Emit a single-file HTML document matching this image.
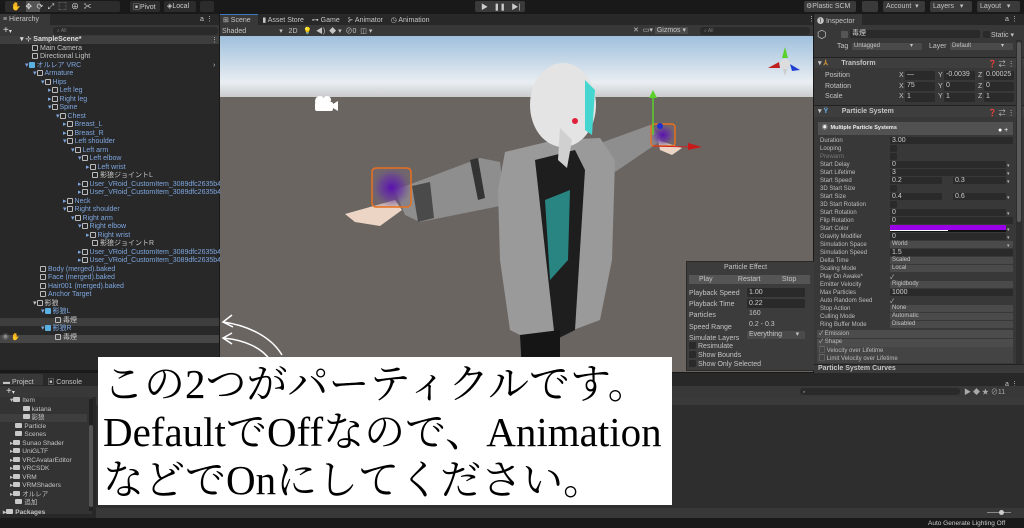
<!DOCTYPE html>
<html><head><meta charset="utf-8"><style>
*{margin:0;padding:0;box-sizing:border-box}
body{width:1024px;height:528px;overflow:hidden;background:#191919;font-family:"Liberation Sans","Noto Sans CJK JP",sans-serif;font-size:7px;color:#c4c4c4;position:relative}
.a{position:absolute;white-space:nowrap}
.btn{position:absolute;background:#3a3a3a;border-radius:2px}
.r{position:absolute;height:8px;line-height:8px;white-space:nowrap}
.b{color:#7ea6df}
.ic{display:inline-block;width:6px;height:6px;border:1px solid #bbb;border-radius:1px;margin-right:2px;vertical-align:-1px}
.fld{position:absolute;background:#2a2a2a;height:7px;line-height:7px;padding-left:2px;border-radius:1px;color:#ccc}
.lbl{position:absolute;left:820px;line-height:8px;height:8px;color:#bdbdbd;font-size:6px}
.dd{position:absolute;background:#4a4a4a;height:7px;line-height:7px;padding-left:2px;border-radius:1px;font-size:6px}
.cb{position:absolute;width:7px;height:7px;background:#2a2a2a;border-radius:1px}
.fo{display:inline-block;width:7px;height:5px;background:#c8c8c8;margin-right:2px;vertical-align:0;border-radius:1px}
</style></head><body>
<!-- top toolbar -->
<div class="btn" style="left:5px;top:1px;width:115px;height:11px;background:#2c2c2c"></div>
<div class="a" style="left:26px;top:1px;width:14px;height:11px;background:#555"></div>
<div class="a" style="left:11px;top:1px;color:#ddd;font-size:8px">✋ &nbsp;✥ &nbsp;⟳ &nbsp;⤢ &nbsp;⬚ &nbsp;⊕ &nbsp;✂</div>
<div class="btn" style="left:130px;top:1px;width:30px;height:11px;background:#2c2c2c"></div>
<div class="a" style="left:133px;top:2px;color:#ccc">▣Pivot</div>
<div class="btn" style="left:164px;top:1px;width:32px;height:11px;background:#2c2c2c"></div>
<div class="a" style="left:167px;top:2px;color:#ccc">◈Local</div>
<div class="btn" style="left:200px;top:1px;width:14px;height:11px;background:#2c2c2c"></div>
<div class="btn" style="left:475px;top:1px;width:50px;height:11px;background:#3a3a3a"></div>
<div class="a" style="left:481px;top:2px;color:#ccc;font-size:7px">▶ &nbsp;&nbsp;❚❚ &nbsp;&nbsp;▶|</div>
<div class="btn" style="left:804px;top:1px;width:52px;height:11px"></div>
<div class="a" style="left:806px;top:2px">⚙Plastic SCM</div>
<div class="btn" style="left:862px;top:1px;width:16px;height:11px"></div>
<div class="btn" style="left:883px;top:1px;width:42px;height:11px"></div>
<div class="a" style="left:886px;top:2px">Account &nbsp;▾</div>
<div class="btn" style="left:930px;top:1px;width:42px;height:11px"></div>
<div class="a" style="left:933px;top:2px">Layers &nbsp;&nbsp;▾</div>
<div class="btn" style="left:977px;top:1px;width:43px;height:11px"></div>
<div class="a" style="left:980px;top:2px">Layout &nbsp;&nbsp;▾</div>

<!-- Hierarchy -->
<div class="a" style="left:0;top:14px;width:219px;height:356px;background:#282828"></div>
<div class="a" style="left:0;top:14px;width:50px;height:11px;background:#383838"></div>
<div class="a" style="left:3px;top:16px">≡ Hierarchy</div>
<div class="a" style="left:200px;top:15px">a ⋮</div>
<div class="a" style="left:0;top:25px;width:219px;height:11px;background:#383838"></div>
<div class="a" style="left:3px;top:25px;font-size:10px;color:#ddd">+<span style="font-size:6px">▾</span></div>
<div class="a" style="left:53px;top:27px;width:165px;height:8px;background:#2a2a2a;border-radius:3px;font-size:5px;line-height:8px;padding-left:4px;color:#777">⌕ All</div>
<div class="a" style="left:0;top:36px;width:219px;height:8px;background:#3e3e3e"></div>
<div class="a" style="left:0;top:318px;width:219px;height:8px;background:#3e3e3e"></div>
<div class="a" style="left:0;top:335px;width:219px;height:8px;background:#464646"></div>
<div class="r" style="left:20px;top:36px;color:#ddd;font-weight:bold">▾ ⊹ SampleScene*</div>
<div class="a" style="left:211px;top:36px">⋮</div>
<div class="r" style="left:32px;top:44.5px"><span class="ic"></span>Main Camera</div>
<div class="r" style="left:32px;top:53px"><span class="ic"></span>Directional Light</div>
<div class="r b" style="left:25px;top:61.5px">▾<span class="ic" style="background:#5ab0e0;border-color:#5ab0e0"></span>オルレア VRC</div>
<div class="a" style="left:213px;top:62px">›</div>
<div class="r b" style="left:33px;top:70px">▾<span class="ic"></span>Armature</div>
<div class="r b" style="left:41px;top:78.5px">▾<span class="ic"></span>Hips</div>
<div class="r b" style="left:48px;top:87px">▸<span class="ic"></span>Left leg</div>
<div class="r b" style="left:48px;top:95.5px">▸<span class="ic"></span>Right leg</div>
<div class="r b" style="left:48px;top:104px">▾<span class="ic"></span>Spine</div>
<div class="r b" style="left:56px;top:112.5px">▾<span class="ic"></span>Chest</div>
<div class="r b" style="left:63px;top:121px">▸<span class="ic"></span>Breast_L</div>
<div class="r b" style="left:63px;top:129.5px">▸<span class="ic"></span>Breast_R</div>
<div class="r b" style="left:63px;top:138px">▾<span class="ic"></span>Left shoulder</div>
<div class="r b" style="left:71px;top:146.5px">▾<span class="ic"></span>Left arm</div>
<div class="r b" style="left:78px;top:155px">▾<span class="ic"></span>Left elbow</div>
<div class="r b" style="left:86px;top:163.5px">▸<span class="ic"></span>Left wrist</div>
<div class="r" style="left:92px;top:172px"><span class="ic"></span>影狼ジョイントL</div>
<div class="r b" style="left:78px;top:180.5px">▸<span class="ic"></span>User_VRoid_CustomItem_3089dfc2635b4</div>
<div class="r b" style="left:78px;top:189px">▸<span class="ic"></span>User_VRoid_CustomItem_3089dfc2635b4</div>
<div class="r b" style="left:63px;top:197.5px">▸<span class="ic"></span>Neck</div>
<div class="r b" style="left:63px;top:206px">▾<span class="ic"></span>Right shoulder</div>
<div class="r b" style="left:71px;top:214.5px">▾<span class="ic"></span>Right arm</div>
<div class="r b" style="left:78px;top:223px">▾<span class="ic"></span>Right elbow</div>
<div class="r b" style="left:86px;top:231.5px">▸<span class="ic"></span>Right wrist</div>
<div class="r" style="left:92px;top:240px"><span class="ic"></span>影狼ジョイントR</div>
<div class="r b" style="left:78px;top:248.5px">▸<span class="ic"></span>User_VRoid_CustomItem_3089dfc2635b4</div>
<div class="r b" style="left:78px;top:257px">▸<span class="ic"></span>User_VRoid_CustomItem_3089dfc2635b4</div>
<div class="r b" style="left:40px;top:265.5px"><span class="ic"></span>Body (merged).baked</div>
<div class="r b" style="left:40px;top:274px"><span class="ic"></span>Face (merged).baked</div>
<div class="r b" style="left:40px;top:282.5px"><span class="ic"></span>Hair001 (merged).baked</div>
<div class="r b" style="left:40px;top:291px"><span class="ic"></span>Anchor Target</div>
<div class="r" style="left:33px;top:299.5px">▾<span class="ic"></span>影狼</div>
<div class="r b" style="left:41px;top:308px">▾<span class="ic" style="background:#5ab0e0;border-color:#5ab0e0"></span>影狼L</div>
<div class="r" style="left:55px;top:316.5px"><span class="ic"></span>毒煙</div>
<div class="r b" style="left:41px;top:325px">▾<span class="ic" style="background:#5ab0e0;border-color:#5ab0e0"></span>影狼R</div>
<div class="r" style="left:55px;top:333.5px"><span class="ic"></span>毒煙</div>
<div class="r" style="left:2px;top:334px;color:#888">◉ ✋</div>

<!-- Scene -->
<div class="a" style="left:220px;top:14px;width:593px;height:22px;background:#282828"></div>
<div class="a" style="left:220px;top:14px;width:38px;height:11px;background:#383838;border-top:1px solid #3a79bb"></div>
<div class="a" style="left:223px;top:16px">⊞ Scene &nbsp;&nbsp;&nbsp;&nbsp;&nbsp;▮ Asset Store &nbsp;&nbsp;&nbsp;⊶ Game &nbsp;&nbsp;&nbsp;⊱ Animator &nbsp;&nbsp;&nbsp;◷ Animation</div>
<div class="a" style="left:808px;top:15px">⋮</div>
<div class="a" style="left:220px;top:25px;width:593px;height:11px;background:#383838"></div>
<div class="a" style="left:222px;top:26px">Shaded &nbsp;&nbsp;&nbsp;&nbsp;&nbsp;&nbsp;&nbsp;&nbsp;&nbsp;&nbsp;&nbsp;&nbsp;&nbsp;&nbsp;&nbsp;&nbsp;▾ &nbsp;&nbsp;2D &nbsp;&nbsp;💡 &nbsp;◀) &nbsp;◆ ▾ &nbsp;⊘0 &nbsp;◫ ▾</div>
<div class="a" style="left:633px;top:26px">✕ &nbsp;▭▾ <span style="background:#4a4a4a;padding:0 2px">Gizmos ▾</span></div>
<div class="a" style="left:700px;top:27px;width:110px;height:8px;background:#2a2a2a;border-radius:3px;font-size:5px;line-height:8px;padding-left:4px;color:#777">⌕ All</div>
<svg class="a" style="left:220px;top:36px" width="593" height="336" viewBox="220 36 593 336">
<defs><linearGradient id="sky" x1="0" y1="0" x2="0" y2="1"><stop offset="0" stop-color="#9fbfdc"/><stop offset="0.75" stop-color="#e9eef2"/><stop offset="1" stop-color="#c8c8c8"/></linearGradient>
<radialGradient id="pu"><stop offset="0" stop-color="#5a10b0"/><stop offset="0.6" stop-color="#6a3aa0" stop-opacity="0.7"/><stop offset="1" stop-color="#7a6a80" stop-opacity="0.3"/></radialGradient></defs>
<rect x="220" y="36" width="593" height="62" fill="url(#sky)"/>
<rect x="220" y="97" width="593" height="275" fill="#6b6562"/>
<path d="M345 214 L395 200 L402 210 L380 226 L355 222Z" fill="#ecd5c4"/>
<path d="M395 190 L480 158 L500 162 L505 205 L420 222 L405 215Z" fill="#8e8e8e"/>
<path d="M412 186 L430 182 L434 218 L418 222Z" fill="#4a4a4a"/>
<path d="M470 160 L478 158 L485 198 L478 200Z" fill="#333"/>
<path d="M595 145 L650 125 L662 140 L615 172Z" fill="#8e8e8e"/>
<path d="M658 140 L682 148 L672 155 L660 150Z" fill="#ecd5c4"/>
<path d="M505 152 L555 140 L600 138 L615 160 L612 260 L600 320 L560 335 L540 345 L510 330 L500 260 L498 190Z" fill="#9a9a9a"/>
<path d="M535 160 L575 150 L585 170 L575 330 L555 340 L545 250Z" fill="#1e1e1e"/>
<path d="M545 200 L570 190 L568 260 L550 280Z" fill="#2fc9c5" opacity="0.6"/>
<path d="M520 335 L560 330 L560 372 L522 372Z" fill="#151515"/>
<ellipse cx="563" cy="105" rx="33" ry="42" fill="#e4e4e4"/>
<path d="M585 80 L595 90 L592 135 L585 130Z" fill="#45d6cf"/>
<path d="M560 128 L572 140 L567 168 L558 160Z" fill="#d0d0d0"/>
<circle cx="575" cy="121" r="3" fill="#e0203a"/>
<rect x="372" y="168" width="39" height="39" rx="4" fill="url(#pu)" stroke="#e8701e" stroke-width="1.5"/>
<rect x="651" y="124" width="24" height="22" rx="3" fill="url(#pu)" stroke="#e8701e" stroke-width="1.5"/>
<line x1="653" y1="135" x2="653" y2="96" stroke="#5ad02a" stroke-width="1.5"/><path d="M649 98 L653 90 L657 98Z" fill="#5ad02a"/>
<line x1="653" y1="146" x2="690" y2="147" stroke="#d02020" stroke-width="1"/><path d="M688 143 L702 147 L688 150Z" fill="#c81a1a"/>
<circle cx="660" cy="126" r="3" fill="#2030d0"/>
<circle cx="320" cy="101" r="5" fill="#fff"/><circle cx="327" cy="100" r="4" fill="#fff"/><rect x="315" y="102" width="18" height="9" rx="2" fill="#fff"/><path d="M333 104 L338 101 L338 111 L333 108Z" fill="#fff"/>
<circle cx="785" cy="64" r="5" fill="#ddd"/><path d="M782 58 L785 47 L788 58Z" fill="#5ad02a"/><path d="M779 62 L768 68 L780 68Z" fill="#c02020"/><path d="M790 64 L800 70 L792 71Z" fill="#2040d0"/><path d="M783 69 L785 76 L787 69Z" fill="#ccc"/>
<path d="M223 322 C245 325 270 335 282 355" stroke="#fff" stroke-width="1.5" fill="none"/>
<path d="M223 338 C245 340 262 348 270 360" stroke="#fff" stroke-width="1.5" fill="none"/>
<path d="M232 315 L223 322 L233 327 M232 333 L223 338 L232 344" stroke="#fff" stroke-width="1.5" fill="none"/>
</svg>
<!-- Particle effect panel -->
<div class="a" style="left:686px;top:261px;width:129px;height:110px;background:#3c3c3c;border:1px solid #2a2a2a"></div>
<div class="a" style="left:724px;top:264px">Particle Effect</div>
<div class="a" style="left:689px;top:275px;width:121px;height:9px;background:#555"></div>
<div class="a" style="left:699px;top:276px">Play &nbsp;&nbsp;&nbsp;&nbsp;&nbsp;&nbsp;&nbsp;&nbsp;&nbsp;&nbsp;&nbsp;&nbsp;Restart &nbsp;&nbsp;&nbsp;&nbsp;&nbsp;&nbsp;&nbsp;&nbsp;&nbsp;&nbsp;Stop</div>
<div class="a" style="left:689px;top:288px;line-height:11.2px">Playback Speed<br>Playback Time<br>Particles<br>Speed Range<br>Simulate Layers</div>
<div class="fld" style="left:747px;top:288px;width:58px;height:9px;line-height:9px">1.00</div>
<div class="fld" style="left:747px;top:299px;width:58px;height:9px;line-height:9px">0.22</div>
<div class="a" style="left:749px;top:310px">160</div>
<div class="a" style="left:749px;top:321px">0.2 - 0.3</div>
<div class="dd" style="left:747px;top:331px;width:58px;height:8px;font-size:7px">Everything &nbsp;&nbsp;&nbsp;&nbsp;&nbsp;&nbsp;▾</div>
<div class="cb" style="left:689px;top:342px"></div><div class="cb" style="left:689px;top:351px"></div><div class="cb" style="left:689px;top:360px"></div>
<div class="a" style="left:698px;top:342px;line-height:9px">Resimulate<br>Show Bounds<br>Show Only Selected</div>

<!-- Inspector -->
<div class="a" style="left:814px;top:14px;width:210px;height:358px;background:#383838"></div>
<div class="a" style="left:814px;top:14px;width:210px;height:11px;background:#282828"></div>
<div class="a" style="left:814px;top:14px;width:48px;height:11px;background:#383838"></div>
<div class="a" style="left:817px;top:16px">❶ Inspector</div>
<div class="a" style="left:1005px;top:15px">a ⋮</div>
<div class="a" style="left:817px;top:28px;font-size:11px;color:#ccc">⬡</div>
<div class="cb" style="left:841px;top:31px;background:#555"></div>
<div class="fld" style="left:850px;top:30px;width:130px;height:8px">毒煙</div>
<div class="cb" style="left:983px;top:31px"></div><div class="a" style="left:991px;top:31px">Static ▾</div>
<div class="a" style="left:837px;top:43px">Tag</div>
<div class="dd" style="left:852px;top:43px;width:70px">Untagged &nbsp;&nbsp;&nbsp;&nbsp;&nbsp;&nbsp;&nbsp;&nbsp;&nbsp;&nbsp;&nbsp;&nbsp;&nbsp;&nbsp;&nbsp;&nbsp;&nbsp;▾</div>
<div class="a" style="left:929px;top:43px">Layer</div>
<div class="dd" style="left:950px;top:43px;width:63px">Default &nbsp;&nbsp;&nbsp;&nbsp;&nbsp;&nbsp;&nbsp;&nbsp;&nbsp;&nbsp;&nbsp;&nbsp;&nbsp;&nbsp;&nbsp;&nbsp;&nbsp;▾</div>
<div class="a" style="left:814px;top:57px;width:210px;height:11px;background:#3e3e3e;border-top:1px solid #222"></div>
<div class="a" style="left:818px;top:59px;font-weight:bold">▾ <span style="color:#e0a040">⅄</span> &nbsp;&nbsp;&nbsp;&nbsp;&nbsp;&nbsp;Transform</div>
<div class="a" style="left:988px;top:59px">❓ ⇄ ⋮</div>
<div class="a" style="left:825px;top:71px;line-height:10.7px">Position<br>Rotation<br>Scale</div>
<div class="a" style="left:899px;top:71px;line-height:10.7px">X<br>X<br>X</div>
<div class="a" style="left:938px;top:71px;line-height:10.7px">Y<br>Y<br>Y</div>
<div class="a" style="left:978px;top:71px;line-height:10.7px">Z<br>Z<br>Z</div>
<div class="fld" style="left:905px;top:71px;width:30px;height:9px">—</div><div class="fld" style="left:944px;top:71px;width:31px;height:9px">-0.0039</div><div class="fld" style="left:984px;top:71px;width:30px;height:9px">0.00025</div>
<div class="fld" style="left:905px;top:82px;width:30px;height:9px">75</div><div class="fld" style="left:944px;top:82px;width:31px;height:9px">0</div><div class="fld" style="left:984px;top:82px;width:30px;height:9px">0</div>
<div class="fld" style="left:905px;top:93px;width:30px;height:9px">1</div><div class="fld" style="left:944px;top:93px;width:31px;height:9px">1</div><div class="fld" style="left:984px;top:93px;width:30px;height:9px">1</div>
<div class="a" style="left:814px;top:105px;width:210px;height:12px;background:#3e3e3e;border-top:1px solid #222"></div>
<div class="a" style="left:818px;top:107px;font-weight:bold">▾ <span style="color:#6ab0e8">Ÿ</span> &nbsp;&nbsp;&nbsp;&nbsp;&nbsp;&nbsp;Particle System</div>
<div class="a" style="left:988px;top:108px">❓ ⇄ ⋮</div>
<div class="a" style="left:818px;top:122px;width:195px;height:13px;background:#515151"></div>
<div class="a" style="left:822px;top:123px;font-size:5.5px;font-weight:bold;color:#eee">◉ &nbsp;Multiple Particle Systems</div>
<div class="a" style="left:998px;top:127px;color:#fff">● +</div>
<div class="lbl" style="top:137px;line-height:8px">Duration<br>Looping<br><span style="color:#777">Prewarm</span><br>Start Delay<br>Start Lifetime<br>Start Speed<br>3D Start Size<br>Start Size<br>3D Start Rotation<br>Start Rotation<br>Flip Rotation<br>Start Color<br>Gravity Modifier<br>Simulation Space<br>Simulation Speed<br>Delta Time<br>Scaling Mode<br>Play On Awake*<br>Emitter Velocity<br>Max Particles<br>Auto Random Seed<br>Stop Action<br>Culling Mode<br>Ring Buffer Mode</div>
<div class="fld" style="left:890px;top:137px;width:123px">3.00</div>
<div class="cb" style="left:890px;top:145px"></div><div class="cb" style="left:890px;top:153px"></div>
<div class="fld" style="left:890px;top:161px;width:116px">0</div>
<div class="fld" style="left:890px;top:169px;width:116px">3</div>
<div class="fld" style="left:890px;top:177px;width:52px">0.2</div><div class="fld" style="left:953px;top:177px;width:53px">0.3</div>
<div class="cb" style="left:890px;top:185px"></div>
<div class="fld" style="left:890px;top:193px;width:52px">0.4</div><div class="fld" style="left:953px;top:193px;width:53px">0.6</div>
<div class="cb" style="left:890px;top:201px"></div>
<div class="fld" style="left:890px;top:209px;width:116px">0</div>
<div class="fld" style="left:890px;top:217px;width:123px">0</div>
<div class="a" style="left:890px;top:225px;width:116px;height:7px;background:#9a00e8;border-bottom:2px solid #111"></div>
<div class="a" style="left:890px;top:230px;width:58px;height:1px;background:#fff"></div>
<div class="fld" style="left:890px;top:233px;width:116px">0</div>
<div class="dd" style="left:890px;top:241px;width:123px">World</div>
<div class="fld" style="left:890px;top:249px;width:123px">1.5</div>
<div class="dd" style="left:890px;top:257px;width:123px">Scaled</div>
<div class="dd" style="left:890px;top:265px;width:123px">Local</div>
<div class="a" style="left:890px;top:272px;font-size:6px">✓</div>
<div class="dd" style="left:890px;top:281px;width:123px">Rigidbody</div>
<div class="fld" style="left:890px;top:289px;width:123px">1000</div>
<div class="a" style="left:890px;top:296px;font-size:6px">✓</div>
<div class="dd" style="left:890px;top:305px;width:123px">None</div>
<div class="dd" style="left:890px;top:313px;width:123px">Automatic</div>
<div class="dd" style="left:890px;top:321px;width:123px">Disabled</div>
<div class="a" style="left:1007px;top:162px;color:#bbb;font-size:5px;line-height:8px">▾<br>▾<br>▾<br><br>▾<br><br>▾<br><br>▾<br>▾<br>▾</div>
<div class="a" style="left:817px;top:330px;width:196px;height:8px;background:#4c4c4c"></div>
<div class="a" style="left:817px;top:339px;width:196px;height:8px;background:#4c4c4c"></div>
<div class="a" style="left:817px;top:347px;width:196px;height:8px;background:#444"></div>
<div class="a" style="left:817px;top:355px;width:196px;height:8px;background:#444"></div>
<div class="a" style="left:819px;top:330px;font-size:6px;line-height:8.4px;color:#bbb">✓ Emission<br>✓ Shape<br>▢ Velocity over Lifetime<br>▢ Limit Velocity over Lifetime</div>
<div class="a" style="left:1016px;top:40px;width:6px;height:330px;background:#2e2e2e"></div>
<div class="a" style="left:1017px;top:42px;width:4px;height:180px;background:#5a5a5a;border-radius:2px"></div>
<div class="a" style="left:814px;top:364px;width:210px;height:9px;background:#3a3a3a;border-top:1px solid #222"></div>
<div class="a" style="left:818px;top:365px;font-weight:bold">Particle System Curves</div>

<!-- Bottom project -->
<div class="a" style="left:0;top:373px;width:1024px;height:145px;background:#282828"></div>
<div class="a" style="left:0;top:374px;width:43px;height:11px;background:#383838"></div>
<div class="a" style="left:3px;top:377px">▬ Project &nbsp;&nbsp;&nbsp;&nbsp;&nbsp;&nbsp;▣ Console</div>
<div class="a" style="left:1005px;top:380px">a ⋮</div>
<div class="a" style="left:0;top:386px;width:1024px;height:11px;background:#383838"></div>
<div class="a" style="left:6px;top:386px;font-size:10px;color:#ddd">+<span style="font-size:6px">▾</span></div>
<div class="a" style="left:800px;top:388px;width:160px;height:7px;background:#2a2a2a;border-radius:3px;font-size:4px;padding-left:3px;line-height:7px">⌕</div>
<div class="a" style="left:964px;top:387px;color:#aaa">▶ ◆ ★ ⊘11</div>
<div class="a" style="left:0;top:397px;width:92px;height:117px;background:#333"></div>
<div class="a" style="left:96px;top:397px;width:928px;height:8px;background:#3a3a3a"></div>
<div class="a" style="left:96px;top:405px;width:928px;height:103px;background:#2e2e2e"></div>
<div class="a" style="left:0;top:414px;width:87px;height:8px;background:#3e3e3e"></div>
<div class="a" style="left:89px;top:399px;width:4px;height:112px;background:#222"></div>
<div class="a" style="left:89px;top:425px;width:4px;height:82px;background:#555;border-radius:2px"></div>
<div class="a" style="left:10px;top:397px;line-height:8.5px;font-size:6.5px">▾<span class="fo"></span>Item<br>&nbsp;&nbsp;&nbsp;&nbsp;&nbsp;&nbsp;&nbsp;<span class="fo"></span>katana<br>&nbsp;&nbsp;&nbsp;&nbsp;&nbsp;&nbsp;&nbsp;<span class="fo"></span>影狼<br>&nbsp;&nbsp;&nbsp;<span class="fo"></span>Particle<br>&nbsp;&nbsp;&nbsp;<span class="fo"></span>Scenes<br>▸<span class="fo"></span>Sunao Shader<br>▸<span class="fo"></span>UniGLTF<br>▸<span class="fo"></span>VRCAvatarEditor<br>▸<span class="fo"></span>VRCSDK<br>▸<span class="fo"></span>VRM<br>▸<span class="fo"></span>VRMShaders<br>▸<span class="fo"></span>オルレア<br>&nbsp;&nbsp;&nbsp;<span class="fo"></span>追加</div>
<div class="a" style="left:3px;top:508px;font-weight:bold;font-size:6.5px">▸<span class="fo"></span>Packages</div>
<div class="a" style="left:96px;top:508px;width:928px;height:10px;background:#383838"></div>
<div class="a" style="left:987px;top:512px;width:24px;height:1px;background:#888"></div>
<div class="a" style="left:999px;top:510px;width:5px;height:5px;border-radius:50%;background:#ccc"></div>
<div class="a" style="left:928px;top:520px;font-size:6.5px;color:#ccc">Auto Generate Lighting Off</div>

<!-- white caption -->
<div class="a" style="left:98px;top:357px;width:574px;height:148px;background:#fff;font-family:'Liberation Serif','Noto Serif CJK JP',serif;color:#000;font-size:41px;line-height:48px;padding:3px 0 0 5px;letter-spacing:0">この2つがパーティクルです。<br>DefaultでOffなので、Animation<br>などでOnにしてください。</div>
</body></html>
